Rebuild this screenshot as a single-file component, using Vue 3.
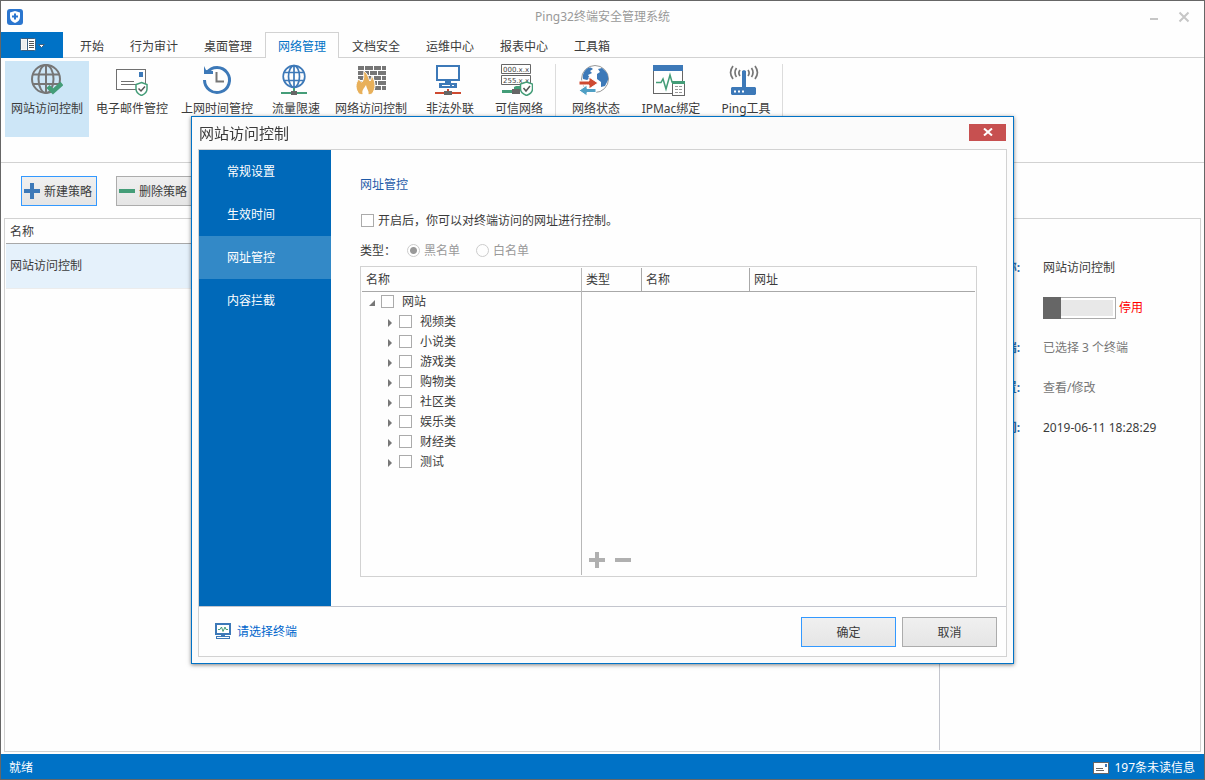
<script setup>
import { ref } from 'vue'

const menus = ['开始', '行为审计', '桌面管理', '网络管理', '文档安全', '运维中心', '报表中心', '工具箱']
const activeMenu = ref('网络管理')

const groups = [
  [
    { icon: 'web', label: '网站访问控制', size: 'wide' },
    { icon: 'mail', label: '电子邮件管控', size: 'wide' },
    { icon: 'clock', label: '上网时间管控', size: 'wide' },
    { icon: 'flow', label: '流量限速', size: 'narrow' },
    { icon: 'wall', label: '网络访问控制', size: 'wide' },
    { icon: 'outreach', label: '非法外联', size: 'narrow' },
    { icon: 'trusted', label: '可信网络', size: 'narrow' }
  ],
  [
    { icon: 'state', label: '网络状态', size: 'narrow' },
    { icon: 'ipmac', label: 'IPMac绑定', size: 'medium' },
    { icon: 'ping', label: 'Ping工具', size: 'narrow' }
  ]
]

const navItems = ['常规设置', '生效时间', '网址管控', '内容拦截']
const activeNav = ref('网址管控')
const categories = ['视频类', '小说类', '游戏类', '购物类', '社区类', '娱乐类', '财经类', '测试']
const enabled = ref(false)
const listType = ref('black')
const policyOn = ref(false)
</script>

<template>
  <div class="window">
    <header class="titlebar">
      <svg class="logo" width="16" height="16" viewBox="0 0 16 16">
        <rect width="16" height="16" rx="3" fill="#2b76cf" />
        <path d="M8 2 L13 3.5 V8 C13 11 11 13 8 14 C5 13 3 11 3 8 V3.5Z" fill="#fff" />
        <path d="M8 4.5 V10.5 M5 7.5 H11" stroke="#2b76cf" stroke-width="2" />
      </svg>
      <h1>Ping32终端安全管理系统</h1>
      <div class="window-buttons">
        <button type="button" aria-label="最小化">
          <svg width="12" height="12" viewBox="0 0 12 12"><path d="M2 8 H10" stroke="#c6c6c6" stroke-width="2" /></svg>
        </button>
        <button type="button" aria-label="关闭">
          <svg width="12" height="12" viewBox="0 0 12 12"><path d="M1.5 1.5 L10.5 10.5 M10.5 1.5 L1.5 10.5" stroke="#c6c6c6" stroke-width="2" /></svg>
        </button>
      </div>
    </header>

    <nav class="menubar">
      <button type="button" class="app-menu" aria-label="应用菜单">
        <svg width="26" height="14" viewBox="0 0 26 14">
          <rect x="0.5" y="0.5" width="15" height="12" rx="1" fill="#fff" stroke="#3c5f80" />
          <path d="M7.5 0 V13" stroke="#3c5f80" />
          <path d="M1.5 1.5 H6.5 V11.5 H1.5Z" fill="#eee" />
          <path d="M9 3.5 H14 M9 5.5 H14 M9 7.5 H14 M9 9.5 H14" stroke="#555" />
          <path d="M18.5 6.5 H24.5 L21.5 9.5Z" fill="#fff" stroke="#3c5f80" />
        </svg>
      </button>
      <button
        v-for="m in menus"
        :key="m"
        type="button"
        class="menu-tab"
        :class="{ active: m === activeMenu }"
        @click="activeMenu = m"
      >{{ m }}</button>
    </nav>

    <section class="ribbon">
      <div v-for="(group, gi) in groups" :key="gi" class="ribbon-group">
        <button v-for="t in group" :key="t.icon" type="button" class="tool" :class="[t.size, { selected: t.icon === 'web' }]">
          <svg v-if="t.icon === 'web'" width="32" height="32" viewBox="0 0 32 32" fill="none">
            <g stroke="#767676" stroke-width="2">
              <circle cx="15" cy="15" r="14" />
              <ellipse cx="15" cy="15" rx="7.5" ry="14" />
              <path d="M15 1 V29 M2 10.5 H28 M2 20 H28" />
            </g>
            <path d="M17 22.5 L22 27.5 L31 19.5" stroke="#449d78" stroke-width="4.5" />
          </svg>
          <svg v-else-if="t.icon === 'mail'" width="32" height="32" viewBox="0 0 32 32" fill="none">
            <rect x="0.5" y="5.5" width="29" height="20" fill="#fff" stroke="#707070" />
            <rect x="23" y="8" width="4" height="5" fill="#3d79b8" />
            <path d="M5 17.5 H18 M5 20.5 H21" stroke="#707070" />
            <path d="M25.5 18.5 L31 20.5 V25 C31 28.5 29 30 25.5 31.5 C22 30 20 28.5 20 25 V20.5Z" fill="#fff" stroke="#449d78" stroke-width="1.5" />
            <path d="M22.5 24.5 L25 27 L29 22.5" stroke="#555" stroke-width="1.5" />
          </svg>
          <svg v-else-if="t.icon === 'clock'" width="32" height="32" viewBox="0 0 32 32" fill="none">
            <path d="M6 8.5 A12.5 12.5 0 1 1 3.5 16" stroke="#3d79b8" stroke-width="3" />
            <path d="M3 2 L5 6 L12 7 V10 H3Z" fill="#3d79b8" />
            <path d="M15.5 8 V17.5 H23" stroke="#767676" stroke-width="2" />
          </svg>
          <svg v-else-if="t.icon === 'flow'" width="32" height="32" viewBox="0 0 32 32" fill="none">
            <g stroke="#3d79b8" stroke-width="1.7">
              <circle cx="16" cy="12.5" r="10.8" />
              <ellipse cx="16" cy="12.5" rx="5.5" ry="10.8" />
              <path d="M16 2 V23 M6 8.5 H26 M6 16.5 H26" />
            </g>
            <path d="M3 29 H29 M16 24 V27" stroke="#449d78" stroke-width="2" />
            <rect x="13" y="27" width="6" height="4" fill="#666" />
          </svg>
          <svg v-else-if="t.icon === 'wall'" width="32" height="32" viewBox="0 0 32 32" fill="none">
            <path d="M3 4 H31 M3 9 H31 M3 14 H31 M3 19 H31 M3 24 H31" stroke="#767676" stroke-width="4" />
            <path d="M9.5 2 V6 M18.5 2 V6 M26.5 2 V6 M14.5 7 V11 M22.5 7 V11 M18.5 12 V16 M26.5 12 V16 M22.5 17 V21 M26.5 22 V26" stroke="#fff" />
            <path d="M9 7 C14 11 13 14 15 17 C16 16 16 14 17 12 C21 18 21 25 17 30 C15 31 6 31 4 30 C0 25 0 19 4 15 C5 17 6 18 7 18 C10 14 8 11 9 7Z" fill="#e8b05a" stroke="#fff" />
            <path d="M11 21 C9 25 6 26 8 31 H13 C15 28 12 26 11 21Z" fill="#fff" />
          </svg>
          <svg v-else-if="t.icon === 'outreach'" width="32" height="32" viewBox="0 0 32 32" fill="none">
            <rect x="5" y="2" width="22" height="14" fill="#fff" stroke="#3d79b8" stroke-width="2" />
            <path d="M13 16 H19 V19 H13Z M7 19 H25 V24 H7Z" fill="#3d79b8" />
            <path d="M10 21.5 H18 M20 21.5 H22" stroke="#fff" />
            <path d="M3 29 H29 M16 25 V27" stroke="#ce4a31" stroke-width="2" />
            <rect x="12" y="27" width="8" height="4" fill="#666" />
          </svg>
          <svg v-else-if="t.icon === 'trusted'" width="32" height="32" viewBox="0 0 32 32" fill="none">
            <path d="M0.5 0.5 H29.5 V9.5 H0.5Z M0.5 11.5 H29.5 V20.5 H0.5Z" fill="#fff" stroke="#666" />
            <text class="ip" x="2" y="8">000.x.x</text>
            <text class="ip" x="2" y="19">255.x.x</text>
            <path d="M1 27.5 H12" stroke="#449d78" stroke-width="3" />
            <path d="M15 22 H19 V25 H13 V23Z" fill="#449d78" />
            <rect x="11" y="25" width="8" height="5" fill="#666" />
            <path d="M25.5 18 L31.5 20 V25 C31.5 28.5 29 30 25.5 31.5 C22 30 19.5 28.5 19.5 25 V20Z" fill="#fff" stroke="#449d78" stroke-width="1.5" />
            <path d="M22.5 24 L25 27 L29 22" stroke="#555" stroke-width="1.5" />
          </svg>
          <svg v-else-if="t.icon === 'state'" width="32" height="32" viewBox="0 0 32 32" fill="none">
            <circle cx="17" cy="15" r="13.5" fill="#fff" stroke="#999" />
            <path d="M5 15 C4 10 7 6 10 4 C12 3 14 4 15 5 L12 7 L14 9 L10 11 L12 14 L9 16Z M20 5 L24 4 C28 7 31 11 30 16 L27 22 L23 23 L23 18 L19 15 L19 10 L22 8Z" fill="#3d79b8" />
            <path d="M1 17 H11 V13 L20 19 L11 25 V21 H1Z" fill="#ce4a31" stroke="#fff" />
            <path d="M18 24.5 H9 V21 L1 26.5 L9 32 V28.5 H18Z" fill="#4f9fc4" stroke="#fff" />
          </svg>
          <svg v-else-if="t.icon === 'ipmac'" width="32" height="32" viewBox="0 0 32 32" fill="none">
            <rect x="0.5" y="1.5" width="29" height="28" fill="#fff" stroke="#666" />
            <rect y="1" width="30" height="6" fill="#3d79b8" />
            <path d="M3 18.5 H8 L10 15 L13 25 L17 11 L19 18 H22" stroke="#449d78" stroke-width="1.5" />
            <rect x="19.5" y="17.5" width="12" height="14" fill="#fff" stroke="#666" />
            <rect x="19" y="17" width="13" height="3" fill="#449d78" />
            <path d="M22 22.5 H30 M22 25.5 H30 M22 28.5 H30" stroke="#999" stroke-dasharray="3 1" />
          </svg>
          <svg v-else width="32" height="32" viewBox="0 0 32 32" fill="none">
            <path d="M4 23 H27 L28 24 V30 L27 31 H4 L3 30 V24Z M14 7 L16 6 L18 7 V23 H14Z" fill="#3d79b8" />
            <path d="M6 27.5 H8 M10 27.5 H12 M14 27.5 H16" stroke="#fff" stroke-width="2" />
            <path d="M5 2 C2 6 2 11 5 15 M8.5 4 C6.5 7 6.5 10 8.5 13 M12 6 C10.5 8 10.5 10 12 12 M27 2 C30 6 30 11 27 15 M23.5 4 C25.5 7 25.5 10 23.5 13 M20 6 C21.5 8 21.5 10 20 12" stroke="#767676" stroke-width="1.7" />
          </svg>
          <span>{{ t.label }}</span>
        </button>
      </div>
    </section>

    <div class="toolbar">
      <button type="button" class="btn primary">
        <svg width="16" height="16" viewBox="0 0 16 16"><path d="M8 0 V16 M0 8 H16" stroke="#3d79b8" stroke-width="4" /></svg>
        <span>新建策略</span>
      </button>
      <button type="button" class="btn">
        <svg width="16" height="16" viewBox="0 0 16 16"><path d="M0 8 H16" stroke="#449d78" stroke-width="4" /></svg>
        <span>删除策略</span>
      </button>
    </div>

    <main class="workspace">
      <div class="policies">
        <table>
          <thead><tr><th>名称</th></tr></thead>
          <tbody><tr><td>网站访问控制</td></tr></tbody>
        </table>
      </div>
      <dl class="details">
        <dt>名称:</dt>
        <dd>网站访问控制</dd>
        <dt></dt>
        <dd><label class="switch-label"><input v-model="policyOn" type="checkbox" role="switch" class="switch" />停用</label></dd>
        <dt>终端:</dt>
        <dd class="muted">已选择 3 个终端</dd>
        <dt>设置:</dt>
        <dd class="muted">查看/修改</dd>
        <dt>时间:</dt>
        <dd>2019-06-11 18:28:29</dd>
      </dl>
    </main>

    <footer class="statusbar">
      <span>就绪</span>
      <span class="unread">
        <svg width="16" height="12" viewBox="0 0 16 12">
          <rect x="0.5" y="0.5" width="15" height="11" fill="#fff" stroke="#666" />
          <rect x="12" y="2" width="2" height="3" fill="#3d79b8" />
          <path d="M3 6.5 H10 M3 8.5 H11" stroke="#666" />
        </svg>
        197条未读信息
      </span>
    </footer>

    <div class="overlay">
      <section class="dialog" role="dialog" aria-labelledby="dialog-title">
        <header class="dialog-title">
          <h2 id="dialog-title">网站访问控制</h2>
          <button type="button" class="dialog-close" aria-label="关闭">
            <svg width="10" height="8" viewBox="0 0 10 8"><path d="M1 0.5 L9 7.5 M9 0.5 L1 7.5" stroke="#fff" stroke-width="2" /></svg>
          </button>
        </header>
        <div class="dialog-body">
          <div class="dialog-main">
            <nav class="side">
              <button
                v-for="n in navItems"
                :key="n"
                type="button"
                :class="{ active: n === activeNav }"
                @click="activeNav = n"
              >{{ n }}</button>
            </nav>
            <div class="pane">
              <h3>网址管控</h3>
              <label class="enable"><input v-model="enabled" type="checkbox" class="tick" />开启后，你可以对终端访问的网址进行控制。</label>
              <div class="types" role="radiogroup" aria-label="类型">
                <span class="types-name">类型：</span>
                <label><input v-model="listType" type="radio" name="list" value="black" disabled />黑名单</label>
                <label><input v-model="listType" type="radio" name="list" value="white" disabled />白名单</label>
              </div>
              <div class="box">
                <div class="tree">
                  <div class="tree-head">名称</div>
                  <ul>
                    <li class="root">
                      <svg width="6" height="6" viewBox="0 0 6 6"><path d="M6 0 V6 H0Z" fill="#777" /></svg>
                      <label><input type="checkbox" class="tick" />网站</label>
                    </li>
                    <li v-for="c in categories" :key="c" class="leaf">
                      <svg width="6" height="8" viewBox="0 0 6 8"><path d="M1 0 L5 4 L1 8Z" fill="#777" /></svg>
                      <label><input type="checkbox" class="tick" />{{ c }}</label>
                    </li>
                  </ul>
                </div>
                <div class="sites">
                  <table>
                    <thead>
                      <tr><th class="col-type">类型</th><th class="col-name">名称</th><th>网址</th></tr>
                    </thead>
                  </table>
                  <div class="site-actions">
                    <button type="button" aria-label="添加">
                      <svg width="16" height="16" viewBox="0 0 16 16"><path d="M8 0 V16 M0 8 H16" stroke="#b0b0b0" stroke-width="4" /></svg>
                    </button>
                    <button type="button" aria-label="删除">
                      <svg width="16" height="16" viewBox="0 0 16 16"><path d="M0 8 H16" stroke="#b0b0b0" stroke-width="4" /></svg>
                    </button>
                  </div>
                </div>
              </div>
            </div>
          </div>
          <footer class="dialog-foot">
            <a href="#">
              <svg width="16" height="16" viewBox="0 0 16 16" fill="none">
                <rect x="1" y="1" width="14" height="10" fill="#fff" stroke="#3d79b8" stroke-width="2" />
                <path d="M3 6.5 H5 L6.5 4 L8 8.5 L10 4 L11 6.5 H13" stroke="#449d78" />
                <path d="M6 12.5 H10" stroke="#3d79b8" />
                <rect x="1.5" y="13.5" width="13" height="2" stroke="#3d79b8" />
              </svg>
              请选择终端
            </a>
            <button type="button" class="btn primary action"><span>确定</span></button>
            <button type="button" class="btn action"><span>取消</span></button>
          </footer>
        </div>
      </section>
    </div>
  </div>
</template>

<style>
body {
  background: #fefefe;
}
</style>

<style scoped>
* {
  box-sizing: border-box;
}

.window {
  display: flex;
  flex-direction: column;
  min-height: 100vh;
  border: 1px solid #666;
  background: #fefefe;
  color: #3b3b3b;
  font: 12px/20px "Noto Sans", "Noto Sans CJK SC", sans-serif;
}

button {
  margin: 0;
  padding: 0;
  border: 0;
  background: none;
  color: inherit;
  font: inherit;
}

svg {
  display: block;
  flex: none;
}

h1, h2, h3, ul, dl, dd {
  margin: 0;
  padding: 0;
  font: inherit;
}

.titlebar {
  display: grid;
  grid-template-columns: 1fr auto 1fr;
  align-items: center;
  height: 31px;
  padding: 0 6px;
}

.titlebar h1 {
  color: #999;
}

.window-buttons {
  display: flex;
  justify-content: flex-end;
  gap: 18px;
  padding-right: 8px;
}

.menubar {
  display: flex;
  height: 26px;
  box-shadow: inset 0 -1px #d2d2d2;
}

.app-menu {
  display: flex;
  align-items: center;
  width: 62px;
  margin-right: 4px;
  padding-left: 19px;
  background: #0072c6;
}

.menu-tab {
  padding: 2px 12px 0;
  border: 1px solid transparent;
  border-bottom: 0;
}

.menu-tab.active {
  border-color: #d2d2d2;
  background: #fefefe;
  color: #0072c6;
}

.ribbon {
  display: flex;
  height: 105px;
  padding: 3px 4px;
  border-bottom: 1px solid #d2d2d2;
}

.ribbon-group {
  display: flex;
  align-items: flex-start;
  gap: 1px;
  margin: 0 4px 0 0;
}

.ribbon-group::after {
  content: "";
  align-self: stretch;
  width: 1px;
  margin: 3px 0 3px 3px;
  background: #dcdcdc;
}

.tool {
  display: flex;
  flex-direction: column;
  align-items: center;
  gap: 3px;
  height: 76px;
  padding-top: 3px;
  white-space: nowrap;
}

.tool.wide {
  width: 84px;
}

.tool.medium {
  width: 80px;
}

.tool.narrow {
  width: 68px;
}

.tool.narrow span,
.tool.medium span {
  padding-left: 4px;
}

.tool.selected {
  background: #cde6f7;
}

.ip {
  fill: #444;
  font: 7px "DejaVu Sans", sans-serif;
}

.toolbar {
  display: flex;
  gap: 19px;
  padding: 13px 20px 12px;
}

.btn {
  display: flex;
  align-items: center;
  justify-content: center;
  gap: 4px;
  height: 30px;
  padding: 0 4px 0 2px;
  border: 1px solid #acacac;
  background: linear-gradient(#f0f0f0, #e5e5e5);
}

.btn span {
  padding-top: 2px;
}

.btn.primary {
  border-color: #3399ff;
}

.workspace {
  flex: 1;
  display: flex;
  margin: 0 3px 2px;
  padding: 0 1px 1px;
  border: 1px solid #d2d2d2;
}

.policies {
  flex: 1;
  border-right: 1px solid #c3c5cd;
}

table {
  width: 100%;
  border-collapse: separate;
  border-spacing: 0;
}

th {
  height: 25px;
  padding: 0 4px;
  border-bottom: 1px solid #a8a8a8;
  font-weight: normal;
  text-align: left;
}

.policies th {
  padding-top: 2px;
}

.policies td {
  height: 45px;
  padding: 0 4px;
  border-bottom: 1px solid #ececec;
  background: #e5f1fb;
}

.details {
  display: grid;
  grid-template-columns: 80px 1fr;
  grid-auto-rows: 40px;
  align-items: center;
  column-gap: 23px;
  width: 259px;
  padding-top: 29px;
}

.details dt {
  color: #2f6fb0;
  font-weight: bold;
  text-align: right;
}

.muted {
  color: #777;
}

.switch-label {
  display: flex;
  align-items: center;
  gap: 3px;
  color: #f00;
}

.switch {
  appearance: none;
  width: 73px;
  height: 22px;
  margin: 0;
  border: 1px solid #ababab;
  background: #e8e8e8;
  box-shadow: inset 0 0 0 2px #fff;
}

.switch::before {
  content: "";
  display: block;
  width: 18px;
  height: 22px;
  margin: -1px;
  background: #666;
}

.switch:checked::before {
  margin-left: auto;
  background: #0072c6;
}

.statusbar {
  display: flex;
  align-items: center;
  justify-content: space-between;
  height: 25px;
  padding: 2px 9px 0 8px;
  background: #0072c6;
  color: #fff;
}

.unread {
  display: flex;
  align-items: center;
  gap: 5px;
}

.overlay {
  position: fixed;
  inset: 0;
  display: flex;
  align-items: center;
  justify-content: center;
}

.dialog {
  display: flex;
  flex-direction: column;
  width: 823px;
  max-width: 100%;
  min-height: 548px;
  padding: 0 6px 6px;
  border: 1px solid #0072c6;
  background: #fbfbfb;
  box-shadow: 0 1px 4px rgba(0, 0, 0, 0.5);
}

.dialog-title {
  display: flex;
  align-items: center;
  justify-content: space-between;
  height: 32px;
}

.dialog-title h2 {
  padding-left: 1px;
  font-size: 15px;
}

.dialog-close {
  display: flex;
  align-items: center;
  justify-content: center;
  width: 37px;
  height: 17px;
  margin: 0 1px 2px 0;
  background: #c75050;
}

.dialog-body {
  flex: 1;
  display: flex;
  flex-direction: column;
  border: 1px solid #d2d2d2;
  background: #fefefe;
}

.dialog-main {
  flex: 1;
  display: flex;
}

.side {
  display: flex;
  flex-direction: column;
  width: 132px;
  background: #0069b9;
  color: #fff;
}

.side button {
  height: 43px;
  padding-left: 28px;
  text-align: left;
}

.side .active {
  background: #3389c7;
}

.pane {
  flex: 1;
  display: flex;
  flex-direction: column;
  padding: 25px 29px 29px;
}

.pane h3 {
  color: #1e5aa8;
}

.enable {
  display: flex;
  align-items: center;
  gap: 4px;
  margin: 16px 0 10px;
  padding-left: 1px;
}

.tick {
  appearance: none;
  flex: none;
  width: 13px;
  height: 13px;
  margin: 0 0 2px;
  border: 1px solid #ababab;
  background: #fff;
}

.tick:checked {
  background: #0072c6;
}

.types {
  display: flex;
  gap: 16px;
  margin-bottom: 5px;
  color: #999;
}

.types-name {
  width: 31px;
  color: #3b3b3b;
  white-space: nowrap;
}

.types label {
  display: flex;
  align-items: center;
  gap: 4px;
}

.types input {
  appearance: none;
  width: 13px;
  height: 13px;
  margin: 0 0 2px;
  border: 1px solid #ccc;
  border-radius: 50%;
}

.types input:checked {
  background: radial-gradient(circle, #999 3px, #fff 4px);
}

.box {
  flex: 1;
  display: flex;
  padding: 1px;
  border: 1px solid #d2d2d2;
}

.tree {
  width: 220px;
  border-right: 1px solid #b8b8b8;
}

.tree-head {
  height: 24px;
  padding: 2px 4px;
  border-bottom: 1px solid #a8a8a8;
}

.tree ul {
  list-style: none;
}

.tree li {
  display: flex;
  align-items: center;
  gap: 6px;
  padding-left: 7px;
}

.tree li > svg {
  margin-top: 2px;
}

.tree .leaf {
  padding-left: 25px;
}

.tree label {
  display: flex;
  align-items: center;
  gap: 8px;
}

.sites {
  flex: 1;
  display: flex;
  flex-direction: column;
  justify-content: space-between;
}

.sites table {
  table-layout: fixed;
}

.sites th {
  height: 24px;
}

.col-type {
  width: 60px;
  border-right: 1px solid #a8a8a8;
}

.col-name {
  width: 108px;
  border-right: 1px solid #a8a8a8;
}

.site-actions {
  display: flex;
  gap: 10px;
  padding: 7px;
}

.dialog-foot {
  display: flex;
  align-items: center;
  gap: 6px;
  height: 50px;
  padding: 0 9px 0 16px;
  border-top: 1px solid #c3c5cd;
}

.dialog-foot a {
  display: flex;
  align-items: center;
  gap: 6px;
  margin-right: auto;
  color: #0066cc;
  text-decoration: none;
}

.dialog-foot a svg {
  margin-bottom: 2px;
}

.action {
  width: 95px;
  padding: 0;
}
</style>
